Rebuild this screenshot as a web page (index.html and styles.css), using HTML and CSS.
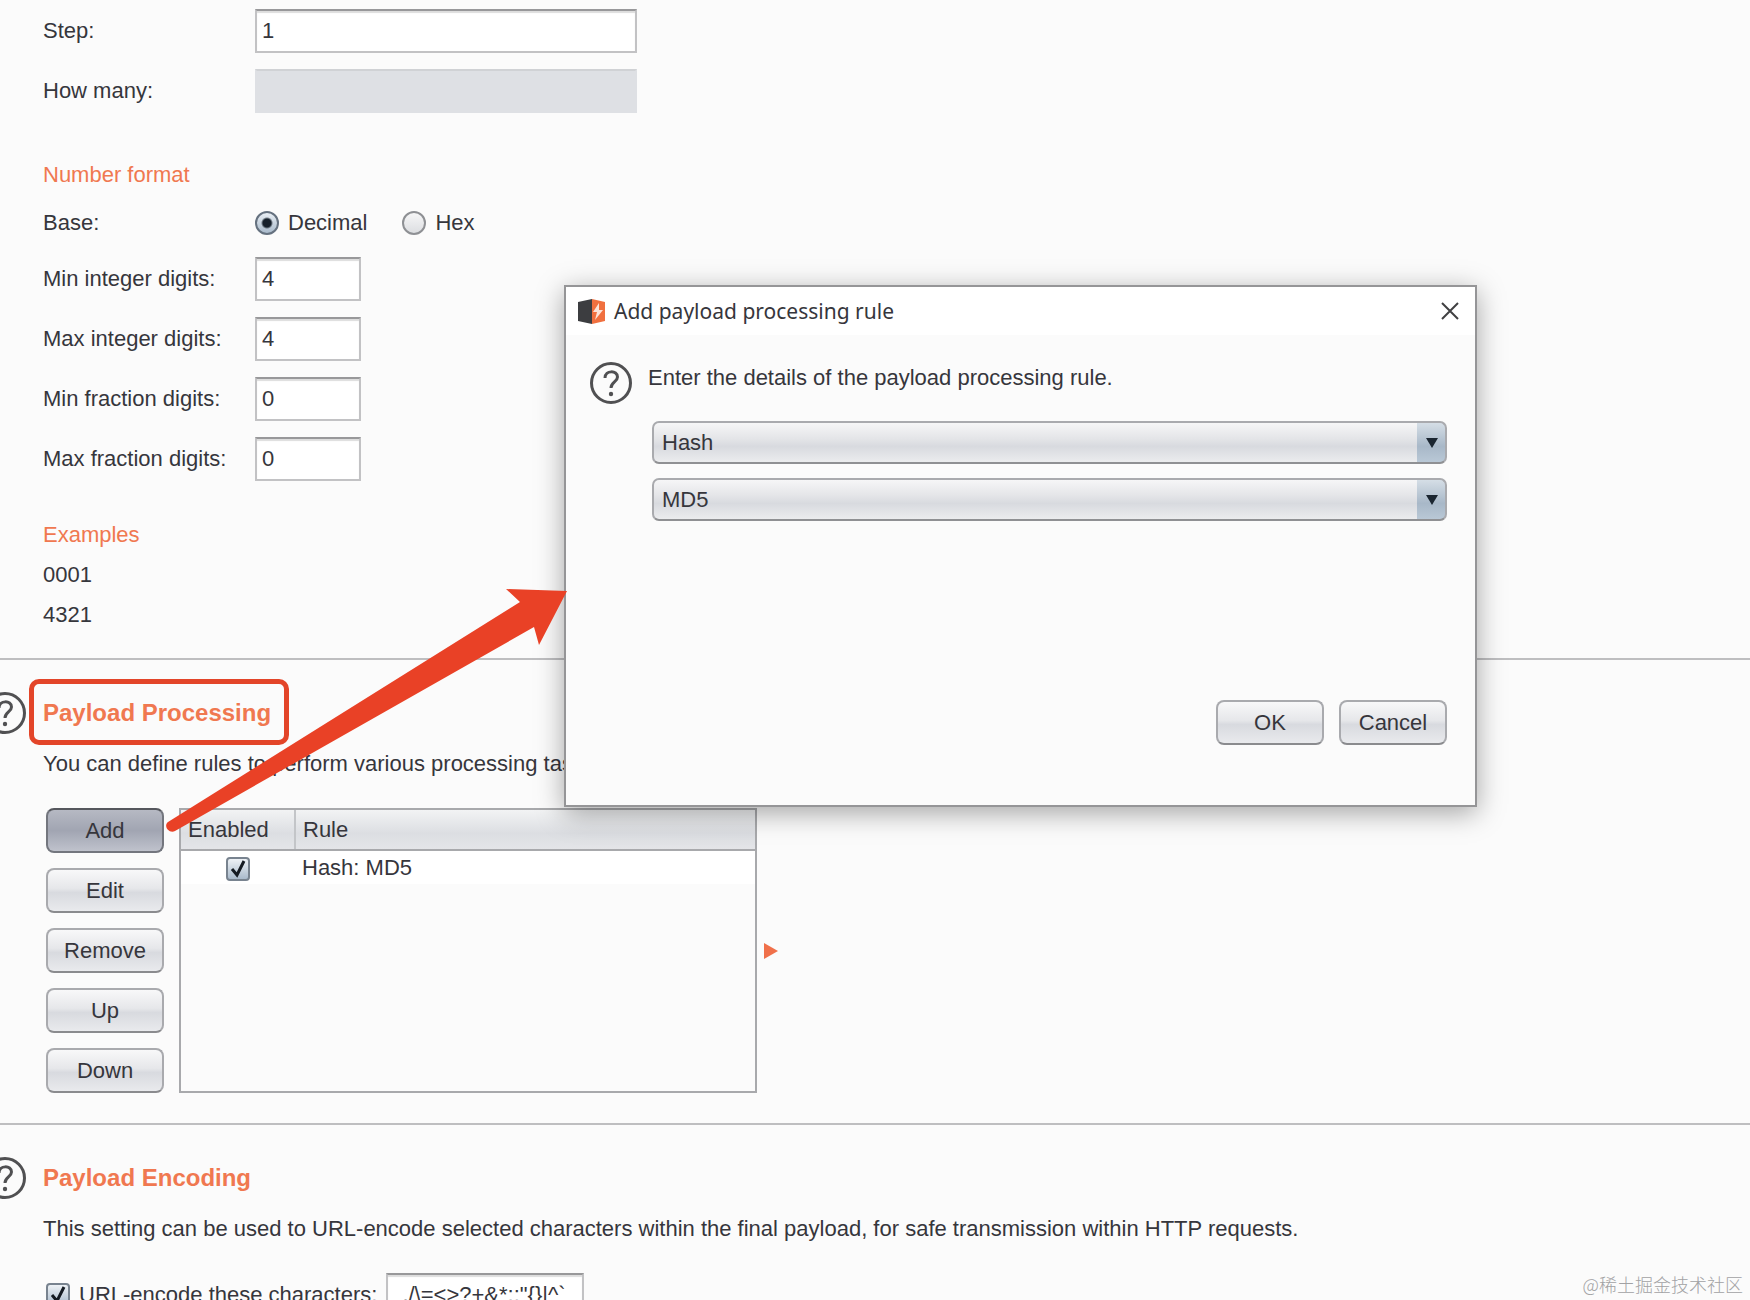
FILE: index.html
```
<!DOCTYPE html>
<html lang="en">

<head>
    <meta charset="UTF-8">
    <meta name="viewport" content="width=device-width, initial-scale=1.0">
    <title>Payloads</title>
    <link rel="stylesheet" href="styles.css">
</head>

<body>
    <main class="page">
        <section class="options">
            <div class="row">
                <label for="step">Step:</label>
                <input class="field" id="step" type="text" value="1">
            </div>
            <div class="row">
                <label for="many">How many:</label>
                <input class="field" id="many" type="text" disabled>
            </div>

            <h3 class="sub">Number format</h3>
            <div class="row base" role="radiogroup" aria-labelledby="base">
                <span id="base">Base:</span>
                <div class="radios">
                    <label><input type="radio" name="base" checked>Decimal</label>
                    <label><input type="radio" name="base">Hex</label>
                </div>
            </div>
            <div class="row">
                <label for="minint">Min integer digits:</label>
                <input class="field short" id="minint" type="text" value="4">
            </div>
            <div class="row">
                <label for="maxint">Max integer digits:</label>
                <input class="field short" id="maxint" type="text" value="4">
            </div>
            <div class="row">
                <label for="minfrac">Min fraction digits:</label>
                <input class="field short" id="minfrac" type="text" value="0">
            </div>
            <div class="row">
                <label for="maxfrac">Max fraction digits:</label>
                <input class="field short" id="maxfrac" type="text" value="0">
            </div>

            <div class="examples">
                <h3 class="sub">Examples</h3>
                <p>0001</p>
                <p>4321</p>
            </div>
        </section>

        <section class="block">
            <div class="head">
                <svg class="help" viewBox="0 0 42 42"><circle cx="21" cy="21" r="19.5"/><path d="M15 16c0-8 12.500-8 12.500-1 0 5-6.500 5-6.500 11"/><circle class="dot" cx="21" cy="32" r="2.200"/></svg>
                <h2 class="marked">Payload Processing</h2>
            </div>
            <p class="desc">You can define rules to perform various processing tasks on each payload before it is used.</p>
            <div class="rules">
                <div class="buttons">
                    <button class="btn pressed" type="button">Add</button>
                    <button class="btn" type="button">Edit</button>
                    <button class="btn" type="button">Remove</button>
                    <button class="btn" type="button">Up</button>
                    <button class="btn" type="button">Down</button>
                </div>
                <div class="list">
                    <table>
                        <thead>
                            <tr>
                                <th class="enabled">Enabled</th>
                                <th>Rule</th>
                            </tr>
                        </thead>
                        <tbody>
                            <tr>
                                <td class="enabled"><input type="checkbox" aria-label="Enabled" checked></td>
                                <td>Hash: MD5</td>
                            </tr>
                        </tbody>
                    </table>
                </div>
                <span class="marker"></span>
            </div>
        </section>

        <section class="block">
            <div class="head">
                <svg class="help" viewBox="0 0 42 42"><circle cx="21" cy="21" r="19.5"/><path d="M15 16c0-8 12.500-8 12.500-1 0 5-6.500 5-6.500 11"/><circle class="dot" cx="21" cy="32" r="2.200"/></svg>
                <h2>Payload Encoding</h2>
            </div>
            <p class="desc">This setting can be used to URL-encode selected characters within the final payload, for safe transmission within HTTP requests.</p>
            <div class="encode">
                <input type="checkbox" id="encode" checked>
                <label for="encode">URL-encode these characters:</label>
                <input class="field chars" type="text" aria-label="Characters" value="./\=&lt;&gt;?+&amp;*;:&quot;{}|^`">
            </div>
        </section>
    </main>

    <div class="dialog" role="dialog" aria-labelledby="title">
        <div class="titlebar">
            <svg class="logo" viewBox="0 0 27 25">
                <path fill="#3c3d40" d="M0 3 14 0v25L0 22z"/>
                <path fill="#f0703f" d="M14 0l13 3v19l-13 3z"/>
                <path fill="#fbe3d8" d="M21 4l-6 9h4l-2 8 8-10h-4z"/>
            </svg>
            <span id="title">Add payload processing rule</span>
            <button class="close" type="button" aria-label="Close">
                <svg viewBox="0 0 18 18"><path d="M1 1l16 16M17 1L1 17"/></svg>
            </button>
        </div>
        <div class="content">
            <svg class="help" viewBox="0 0 42 42"><circle cx="21" cy="21" r="19.5"/><path d="M15 16c0-8 12.500-8 12.500-1 0 5-6.500 5-6.500 11"/><circle class="dot" cx="21" cy="32" r="2.200"/></svg>
            <div class="detail">
                <p>Enter the details of the payload processing rule.</p>
                <select aria-label="Rule type">
                    <option>Hash</option>
                </select>
                <select aria-label="Hash function">
                    <option>MD5</option>
                </select>
            </div>
        </div>
        <div class="actions">
            <button class="btn" type="button">OK</button>
            <button class="btn" type="button">Cancel</button>
        </div>
    </div>

    <svg class="arrow" viewBox="0 0 402 244">
        <path d="M2 233L354 13 340 0l61 2-28 54-5-18L9 242C3 245-3 237 2 233z"/>
    </svg>

    <div class="watermark">@稀土掘金技术社区</div>
</body>

</html>
```
FILE: styles.css
```
* {
    margin: 0;
    padding: 0;
    box-sizing: border-box;
}

body {
    height: 100vh;
    overflow: hidden;
    position: relative;
    background-color: #fbfbfb;
    color: #36363c;
    font: 22px/32px "Liberation Sans", Arial, sans-serif;
}

input,
select,
button {
    font: inherit;
    color: inherit;
}

.options {
    display: flex;
    flex-direction: column;
    gap: 16px;
    padding: 9px 43px 23px;
}

.row {
    display: grid;
    grid-template-columns: 212px 1fr;
    align-items: center;
    height: 44px;
}

.field {
    width: 382px;
    height: 44px;
    padding: 0 5px;
    background-color: #fff;
    border: 2px solid #c2c2c4;
    border-top-color: #98989a;
    box-shadow: inset 0 2px 1px #ddd;
}

.field:disabled {
    background-color: #dee0e4;
    border-color: #dee0e4;
    border-top-color: #d0d2d5;
    box-shadow: none;
}

.short {
    width: 106px;
}

.sub {
    color: #f07850;
    font-size: 22px;
    font-weight: normal;
}

.row + .sub {
    margin-top: 30px;
}

.base {
    height: 32px;
    margin-bottom: 2px;
}

.radios {
    display: flex;
    gap: 35px;
}

.radios label {
    display: flex;
    align-items: center;
    gap: 9px;
}

input[type=radio] {
    appearance: none;
    width: 24px;
    height: 24px;
    border: 2px solid #8e9094;
    border-radius: 50%;
    background: linear-gradient(#f6f6f7, #dcdee1);
}

input[type=radio]:checked {
    border-color: #65717f;
    background: radial-gradient(circle, #16202b 4px, transparent 6px), linear-gradient(#e9eff5, #a9bacb);
}

.examples {
    margin-top: 18px;
    line-height: 40px;
}

.block {
    border-top: 2px solid #bebec0;
    padding: 32px 43px 30px 46px;
}

.head {
    display: flex;
    align-items: center;
    gap: 17px;
    height: 42px;
    margin-left: -62px;
}

.help {
    width: 42px;
    height: 42px;
    flex: none;
    fill: none;
    stroke: #505052;
    stroke-width: 3;
}

.help .dot {
    fill: #505052;
    stroke: none;
}

h2 {
    position: relative;
    color: #f07850;
    font-size: 24px;
}

.marked::after {
    content: "";
    position: absolute;
    inset: -18px -18px -16px -14px;
    border: 5px solid #e34529;
    border-radius: 10px;
}

.desc {
    margin: 14px 0 28px -3px;
}

.rules {
    display: flex;
    gap: 15px;
}

.buttons {
    display: flex;
    flex-direction: column;
    gap: 15px;
    width: 118px;
}

.btn {
    height: 45px;
    border: 2px solid #a9aaae;
    border-bottom-color: #8a8b8e;
    border-radius: 8px;
    background: linear-gradient(#f8f8f9, #e6e7ea 45%, #d8dadf 55%, #e9eaed);
}

.pressed {
    border-color: #73767e;
    border-top-color: #55575d;
    background: linear-gradient(#b6b9c3, #a1a5b2 50%, #bfc2cc);
}

.list {
    width: 578px;
    border: 2px solid #a8a9ac;
}

table {
    width: 100%;
    border-collapse: collapse;
}

th,
td {
    padding: 0 7px;
    height: 34px;
    text-align: left;
    font-weight: normal;
    line-height: 30px;
}

th {
    height: 40px;
    border-bottom: 2px solid #a8a9ac;
    background: linear-gradient(#f2f3f4, #dcdee2 60%, #e4e5e8);
}

tbody {
    background-color: #fff;
}

.enabled {
    width: 114px;
}

th.enabled {
    border-right: 2px solid #c3c5c8;
}

td.enabled {
    text-align: center;
}

input[type=checkbox] {
    appearance: none;
    width: 24px;
    height: 24px;
    vertical-align: middle;
    border: 2px solid #78838f;
    border-radius: 4px;
    background: url("data:image/svg+xml,%3Csvg xmlns='http://www.w3.org/2000/svg' viewBox='0 0 20 20'%3E%3Cpath d='M4 10l5 6L16 2' fill='none' stroke='%23151b22' stroke-width='3'/%3E%3C/svg%3E"), linear-gradient(#eef2f6, #a9bacb);
}

.marker {
    align-self: center;
    margin-left: -8px;
    border: 8px solid transparent;
    border-left: 14px solid #f0704a;
    border-right: 0;
}

.encode {
    display: flex;
    align-items: center;
    gap: 9px;
}

.chars {
    width: 198px;
    padding: 0 14px;
}

.dialog {
    position: absolute;
    top: 285px;
    left: 564px;
    width: 913px;
    background-color: #fbfbfb;
    border: 2px solid #959597;
    box-shadow: 0 6px 26px rgba(0, 0, 0, .35);
}

.titlebar {
    display: flex;
    align-items: center;
    gap: 9px;
    height: 48px;
    padding: 0 16px 0 12px;
    background-color: #fff;
    font-family: "Noto Sans", sans-serif;
    font-size: 21px;
}

.logo {
    width: 27px;
    height: 25px;
}

.close {
    width: 18px;
    height: 18px;
    margin-left: auto;
    border: 0;
    background: none;
}

.close svg {
    display: block;
    fill: none;
    stroke: #404042;
    stroke-width: 2;
}

.content {
    display: flex;
    gap: 16px;
    padding: 27px 28px 0 24px;
}

.detail {
    flex: 1;
    display: flex;
    flex-direction: column;
    gap: 14px;
}

.detail p {
    margin-bottom: 13px;
}

select {
    appearance: none;
    height: 43px;
    margin-left: 4px;
    padding: 0 8px;
    border: 2px solid #a9aaae;
    border-bottom-color: #8f9093;
    border-radius: 7px;
    background:
        url("data:image/svg+xml,%3Csvg xmlns='http://www.w3.org/2000/svg' viewBox='0 0 12 10'%3E%3Cpath d='M0 0h12L6 10z' fill='%231b2631'/%3E%3C/svg%3E") right 7px center / 12px 10px no-repeat,
        linear-gradient(#d5dee6, #a8b8c8 60%, #b9c8d6) right / 28px 100% no-repeat,
        linear-gradient(#f6f6f7, #e4e5e8 40%, #d8dadf 60%, #ebecee);
}

.actions {
    display: flex;
    justify-content: flex-end;
    gap: 15px;
    padding: 179px 28px 60px;
}

.actions .btn {
    width: 108px;
}

.arrow {
    position: absolute;
    top: 589px;
    left: 166px;
    width: 402px;
    height: 244px;
    fill: #e94126;
}

.watermark {
    position: absolute;
    right: 7px;
    bottom: 0;
    color: #a2a2a4;
    font: 300 18px/32px "Noto Sans CJK SC", sans-serif;
}
```
